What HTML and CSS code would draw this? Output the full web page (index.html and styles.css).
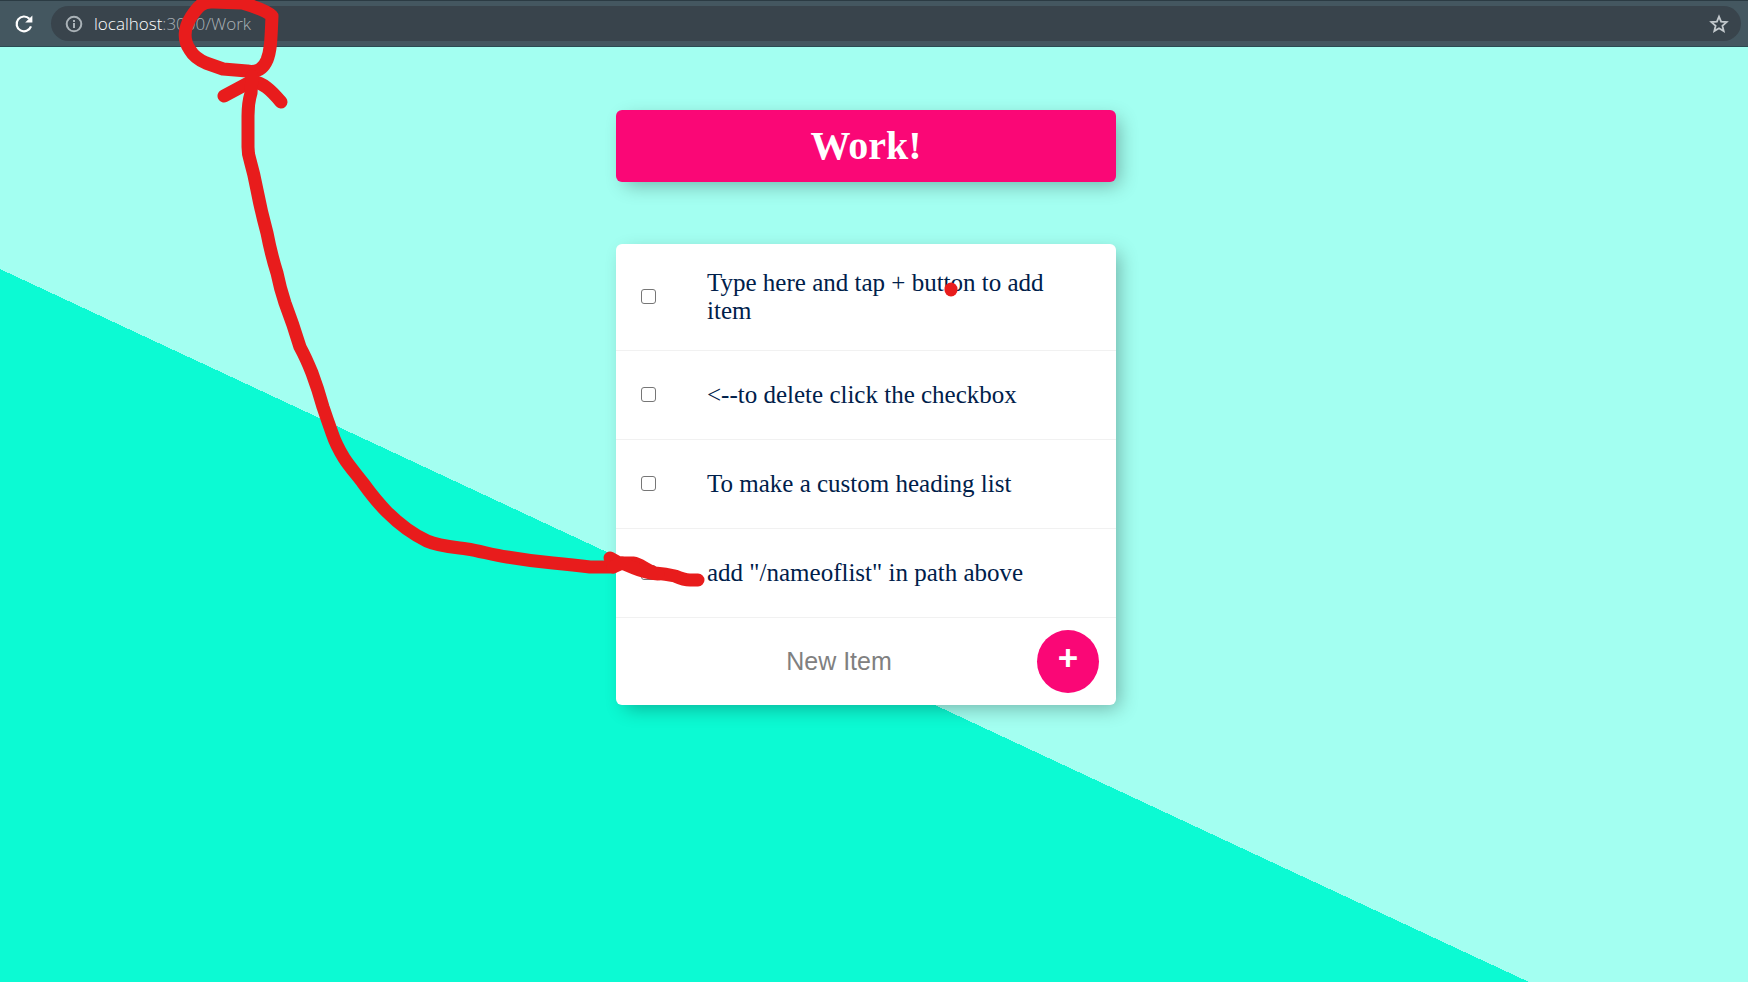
FILE: index.html
```html
<!DOCTYPE html>
<html lang="en">
<head>
<meta charset="utf-8">
<title>Work</title>
<link rel="stylesheet" href="styles.css">
</head>
<body>
<header class="toolbar">
  <button class="icon-button" type="button" aria-label="Reload">
    <svg width="20" height="20" viewBox="0 0 20 20" fill="none" stroke="#fff" stroke-width="2.2">
      <path d="M17 12.4A7.4 7.4 0 1 1 15.4 4.8"/>
      <path d="M18.4 1.4V8.6H11.2Z" fill="#fff" stroke="none"/>
    </svg>
  </button>
  <div class="address">
    <svg class="info" width="18" height="18" viewBox="0 0 18 18" fill="none" stroke="#aab2b7" stroke-width="2">
      <circle cx="9" cy="9" r="7.3"/>
      <path d="M9 8v5M9 5v2"/>
    </svg>
    <a class="url" href="#"><span class="host">localhost</span>:3000/Work</a>
    <button class="icon-button star" type="button" aria-label="Bookmark this page">
      <svg width="20" height="20" viewBox="0 0 20 20" fill="none" stroke="#c3c9cd" stroke-width="1.8">
        <path d="M10 2.6L12.1 7.7L17.6 8.1L13.4 11.7L14.7 17.1L10 14.2L5.3 17.1L6.6 11.7L2.4 8.1L7.9 7.7Z"/>
      </svg>
    </button>
  </div>
</header>
<main class="page">
  <div class="box heading">
    <h1 class="title">Work!</h1>
  </div>
  <div class="box">
    <div class="item">
      <input class="check" type="checkbox" id="item-1">
      <label class="text" for="item-1">Type here and tap + button to add item</label>
    </div>
    <div class="item">
      <input class="check" type="checkbox" id="item-2">
      <label class="text" for="item-2">&lt;--to delete click the checkbox</label>
    </div>
    <div class="item">
      <input class="check" type="checkbox" id="item-3">
      <label class="text" for="item-3">To make a custom heading list</label>
    </div>
    <div class="item">
      <input class="check" type="checkbox" id="item-4">
      <label class="text" for="item-4">add "/nameoflist" in path above</label>
    </div>
    <form class="new-item">
      <input class="new-text" type="text" placeholder="New Item" aria-label="New Item" autocomplete="off">
      <button class="add" type="button">+</button>
    </form>
  </div>
</main>
<svg class="marker" aria-hidden="true">
  <path d="M213 2C202 1 197 8 191 17C184 28 183 40 190 50C194 57 199 60 206 63L223 69L247 71C259 73 264 67 267 60C271 50 271 38 272 16C266 10 252 6 242 3Z"/>
  <path d="M224 96L252 81C263 83 270 89 281 102"/>
  <path d="M252 76L251 93Q248 103 248 116V147Q248 154 250 160Q254 174 257 190Q261 211 267 233Q271 254 277 273Q280 288 285 303Q293 324 300 347Q306 358 312 373Q318 389 323 407Q327 419 332 433Q336 445 344 458C349 466 357 475 363 483C371 494 378 503 387 512C397 522 410 533 427 541C438 546 452 547 467 549C480 551 493 555 507 557Q530 561 553 563Q574 565 590 567H613"/>
  <path d="M610 558L619 563H633C641 564 645 570 655 573Q666 574 675 576Q684 580 690 580H698"/>
  <path d="M613 567L622 563L634 568Q646 573 658 574"/>
  <path d="M951 289V290"/>
</svg>
</body>
</html>
```

FILE: styles.css
```css
* {
  box-sizing: border-box;
}

body {
  position: relative;
  display: flex;
  flex-direction: column;
  min-height: 100vh;
  margin: 0;
  font-family: "Liberation Serif", "Times New Roman", serif;
}

.toolbar {
  display: flex;
  align-items: center;
  gap: 17px;
  height: 47px;
  padding: 0 7px 0 14px;
  background: #445760;
  border-top: 1px solid #2b3b43;
  border-bottom: 1px solid #2a4b53;
}

.icon-button {
  display: flex;
  padding: 0;
  border: 0;
  background: none;
}

.address {
  display: flex;
  flex: 1;
  align-items: center;
  height: 35px;
  padding: 0 12px 0 14px;
  border-radius: 18px;
  background: #39444c;
}

.url {
  flex: 1;
  margin-left: 11px;
  color: #aab2b7;
  font: 300 17px/24px "Open Sans", "Noto Sans", sans-serif;
  text-decoration: none;
}

.host {
  color: #fff;
}

.page {
  flex: 1;
  padding: 63px 16px 63px 0;
  background: linear-gradient(205deg, #a3fff1 940px, #0cfad3 940px);
}

.box {
  max-width: 500px;
  margin: 0 auto 62px;
  border-radius: 6px;
  background: #fff;
  box-shadow: 6px 6px 19px -3px rgba(0, 0, 0, 0.3);
}

.box:last-child {
  margin-bottom: 0;
}

.heading {
  padding: 13px;
  background: #fa0776;
}

.title {
  margin: 0;
  color: #fff;
  font-size: 40px;
  line-height: 46px;
  text-align: center;
}

.item {
  display: flex;
  align-items: center;
  min-height: 89px;
  padding: 25px 25px 25px 0;
  border-bottom: 1px solid #f1f1f1;
}

.check {
  appearance: none;
  flex: none;
  width: 15px;
  height: 15px;
  margin: 0 51px 1px 25px;
  border: 1px solid #767676;
  border-radius: 3px;
  background: #fff;
}

.check:checked {
  background: #fa0776;
}

.text {
  flex: 1;
  color: #00204a;
  font-size: 25px;
  line-height: 28px;
}

.new-item {
  display: flex;
  align-items: center;
  height: 87px;
  padding: 0 17px 0 25px;
}

.new-text {
  flex: 1;
  min-width: 0;
  height: 75px;
  padding: 0;
  border: 0;
  outline: 0;
  background: transparent;
  font: 25px "Liberation Sans", Arial, sans-serif;
  text-align: center;
}

.new-text::placeholder {
  color: #808080;
}

.add {
  width: 62px;
  height: 63px;
  padding: 0 0 8px;
  border: 0;
  border-radius: 50%;
  background: #fa0776;
  color: #fff;
  font: bold 35px "Liberation Sans", Arial, sans-serif;
}

.marker {
  position: absolute;
  top: 0;
  left: 0;
  width: 100%;
  height: 100%;
  fill: none;
  stroke: #e81c1c;
  stroke-width: 13px;
  stroke-linecap: round;
  stroke-linejoin: round;
  pointer-events: none;
}
```
